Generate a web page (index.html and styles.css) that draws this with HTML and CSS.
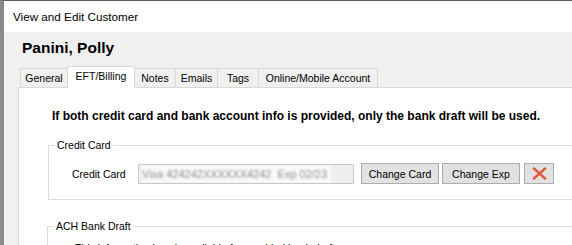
FILE: index.html
```html
<!DOCTYPE html>
<html>
<head>
<meta charset="utf-8">
<link rel="stylesheet" href="styles.css">
</head>
<body>
<div class="window">
  <div class="titlebar">View and Edit Customer</div>
  <div class="client">
    <div class="name">Panini, Polly</div>
    <div class="tabs">
      <div class="tab t-general">General</div>
      <div class="tab active t-eft">EFT/Billing</div>
      <div class="tab t-notes">Notes</div>
      <div class="tab t-emails">Emails</div>
      <div class="tab t-tags">Tags</div>
      <div class="tab t-online">Online/Mobile Account</div>
    </div>
    <div class="panel">
      <p class="notice">If both credit card and bank account info is provided, only the bank draft will be used.</p>
      <fieldset class="group cc">
        <legend>Credit Card</legend>
        <div class="row">
          <span class="label">Credit Card</span>
          <div class="textbox"><span class="masked">Visa 424242XXXXXX4242&nbsp; Exp 02/23</span></div>
          <button class="btn btn-wide">Change Card</button>
          <button class="btn btn-wide btn-exp">Change Exp</button>
          <button class="btn btn-del" aria-label="Remove card">
            <svg width="15" height="13" viewBox="0 0 15 13"><path d="M1.2 0.8 L13.8 12.2 M13.8 0.8 L1.2 12.2" stroke="#e0563b" stroke-width="2.4" fill="none"/></svg>
          </button>
        </div>
      </fieldset>
      <fieldset class="group ach">
        <legend>ACH Bank Draft</legend>
        <p class="info">This information is only available for provided bank drafts.</p>
      </fieldset>
    </div>
  </div>
</div>
</body>
</html>
```

FILE: styles.css
```css
html, body {
  margin: 0;
  padding: 0;
  width: 572px;
  height: 245px;
  overflow: hidden;
  background: #ffffff;
}

.window {
  border-top: 1px solid #5f5f5f;
  border-left: 4px solid #8a8a8a;
  height: 300px;
  width: 700px;
  background: #f0f0f0;
  font-family: "Liberation Sans", Arial, sans-serif;
  font-size: 10.5px;
  color: #000;
}

.titlebar {
  height: 31px;
  line-height: 31px;
  background: #ffffff;
  padding-left: 9px;
  font-size: 11.7px;
  color: #000;
}

.client {
  background: #f0f0f0;
  padding-top: 7px;
}

.name {
  font-weight: bold;
  font-size: 15.5px;
  line-height: 18px;
  height: 18px;
  padding-left: 18px;
  margin-bottom: 9px;
}

.tabs {
  display: flex;
  align-items: flex-end;
  height: 21px;
  margin-left: 16px;
}

.tab {
  box-sizing: border-box;
  height: 19px;
  line-height: 19px;
  border: 1px solid #d9d9d9;
  border-bottom: none;
  margin-right: -1px;
  background: #f0f0f0;
  text-align: center;
  white-space: nowrap;
}

.tab.active {
  position: relative;
  z-index: 1;
  height: 22px;
  margin-bottom: -1px;
  line-height: 18px;
  background: #ffffff;
}

.t-general { width: 48px; }
.t-eft { width: 68px; }
.t-notes { width: 42px; }
.t-emails { width: 43px; }
.t-tags { width: 42px; }
.t-online { width: 120px; }

.panel {
  margin-left: 14px;
  background: #ffffff;
  border: 1px solid #d9d9d9;
  height: 200px;
  padding-top: 21px;
  padding-left: 33px;
}

.notice {
  margin: 0;
  font-weight: bold;
  font-size: 12px;
  line-height: 15px;
  white-space: nowrap;
}

.group {
  margin: 0;
  padding: 0;
  border: 1px solid #dcdcdc;
  width: 620px;
  min-width: 0;
}

.group legend {
  margin-left: 6px;
  padding: 0 2px;
  line-height: 14px;
}

.cc {
  margin-top: 14px;
  margin-left: -4px;
  padding: 11px 0 15px 0;
}

.row {
  display: flex;
  align-items: center;
  height: 21px;
  padding-left: 23px;
}

.label {
  width: 66px;
  white-space: nowrap;
}

.textbox {
  box-sizing: border-box;
  width: 216px;
  height: 20px;
  border: 1px solid #c8c8c8;
  background: #efefef;
  display: flex;
  align-items: center;
  padding-left: 3px;
  overflow: hidden;
}

.masked {
  background: #f9f9f9;
  color: #8c8c8c;
  filter: blur(1.2px);
  white-space: nowrap;
  padding-right: 4px;
  font-size: 11px;
  line-height: 18px;
}

.btn {
  box-sizing: border-box;
  height: 21px;
  margin: 0;
  padding: 0;
  border: 1px solid #adadad;
  background: #e1e1e1;
  font-family: inherit;
  font-size: inherit;
  color: #000;
  display: flex;
  align-items: center;
  justify-content: center;
}

.btn-wide {
  width: 78px;
  margin-left: 7px;
}

.btn-exp {
  margin-left: 3px;
}

.btn-del {
  width: 30px;
  margin-left: 4px;
}

.ach {
  margin-top: 19px;
  margin-left: -5px;
  padding: 8px 0 20px 0;
}

.info {
  margin: 0;
  padding-left: 27px;
  line-height: 14px;
  white-space: nowrap;
}
```
